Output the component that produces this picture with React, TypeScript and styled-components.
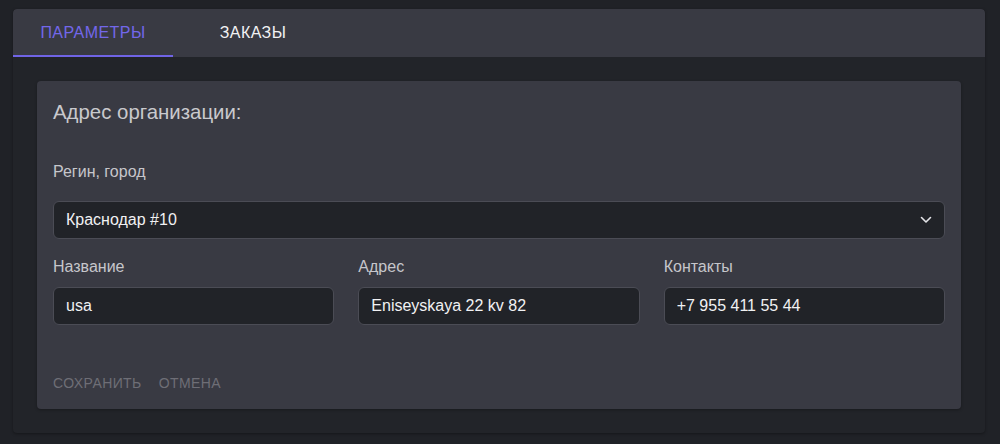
import React, { useState } from "react";
import styled, { createGlobalStyle } from "styled-components";

const GlobalStyle = createGlobalStyle`
  html, body {
    margin: 0;
    padding: 0;
    background: #202227;
    font-family: "Liberation Sans", Arial, sans-serif;
  }
`;

const Page = styled.div`
  padding: 9px 15px 11px 13px;
`;

const Panel = styled.div`
  background: #222429;
  border-radius: 4px;
  box-shadow: 0 1px 3px rgba(0, 0, 0, 0.35);
  overflow: hidden;
`;

const TabBar = styled.div`
  display: flex;
  height: 48px;
  background: #393a43;
  border-radius: 4px 4px 0 0;
`;

const Tab = styled.button<{ $active?: boolean }>`
  width: 160px;
  height: 48px;
  border: none;
  border-bottom: 2px solid ${(p) => (p.$active ? "#7064e6" : "transparent")};
  background: transparent;
  color: ${(p) => (p.$active ? "#7367ea" : "#f2f2f4")};
  font-family: inherit;
  font-size: 16px;
  letter-spacing: 0.02857em;
  text-transform: uppercase;
  padding: 2px 0 0;
  cursor: pointer;
`;

const Content = styled.div`
  padding: 24px;
`;

const Card = styled.div`
  background: #393a43;
  border-radius: 4px;
  box-shadow: 0 1px 3px rgba(0, 0, 0, 0.3);
  padding: 16px 16px 8px;
`;

const Title = styled.div`
  font-size: 20.4px;
  line-height: 30px;
  color: #c9c9cd;
`;

const Label = styled.div<{ $top?: number; $bottom?: number }>`
  font-size: 16px;
  line-height: 20px;
  color: #c6c6cb;
  margin-top: ${(p) => p.$top ?? 0}px;
  margin-bottom: ${(p) => p.$bottom ?? 10}px;
`;

const SelectBox = styled.div`
  display: flex;
  align-items: center;
  height: 38px;
  margin-top: 19px;
  box-sizing: border-box;
  border: 1px solid #4b4c55;
  border-radius: 6px;
  background: #212328;
  padding: 0 12px;
  color: #f1f1f3;
  font-size: 16px;
`;

const SelectText = styled.span`
  flex: 1;
`;

const Row = styled.div`
  display: grid;
  grid-template-columns: repeat(3, 1fr);
  gap: 24px;
  margin-top: 18px;
`;

const Field = styled.div`
  display: flex;
  flex-direction: column;
`;

const Input = styled.input`
  height: 38px;
  box-sizing: border-box;
  border: 1px solid #4b4c55;
  border-radius: 6px;
  background: #212328;
  padding: 0 12px;
  color: #f1f1f3;
  font-family: inherit;
  font-size: 16px;
  outline: none;
`;

const Actions = styled.div`
  display: flex;
  gap: 17px;
  margin-top: 40px;
`;

const TextButton = styled.button`
  height: 36px;
  border: none;
  background: transparent;
  padding: 0;
  color: #6e6e76;
  font-family: inherit;
  font-size: 14px;
  letter-spacing: 0.02857em;
  text-transform: uppercase;
`;

const Chevron = () => (
  <svg width="12" height="8" viewBox="0 0 12 8" fill="none">
    <path d="M1.5 1.5 L6 6 L10.5 1.5" stroke="#e4e4e8" strokeWidth="1.6" strokeLinecap="round" strokeLinejoin="round" />
  </svg>
);

export default function App() {
  const [tab, setTab] = useState(0);
  const [name, setName] = useState("usa");
  const [address, setAddress] = useState("Eniseyskaya 22 kv 82");
  const [contacts, setContacts] = useState("+7 955 411 55 44");

  return (
    <>
      <GlobalStyle />
      <Page>
        <Panel>
          <TabBar>
            <Tab $active={tab === 0} onClick={() => setTab(0)}>Параметры</Tab>
            <Tab $active={tab === 1} onClick={() => setTab(1)}>Заказы</Tab>
          </TabBar>
          <Content>
            <Card>
              <Title>Адрес организации:</Title>
              <Label $top={35} $bottom={0}>Регин, город</Label>
              <SelectBox>
                <SelectText>Краснодар #10</SelectText>
                <Chevron />
              </SelectBox>
              <Row>
                <Field>
                  <Label>Название</Label>
                  <Input value={name} onChange={(e) => setName(e.target.value)} />
                </Field>
                <Field>
                  <Label>Адрес</Label>
                  <Input value={address} onChange={(e) => setAddress(e.target.value)} />
                </Field>
                <Field>
                  <Label>Контакты</Label>
                  <Input value={contacts} onChange={(e) => setContacts(e.target.value)} />
                </Field>
              </Row>
              <Actions>
                <TextButton>Сохранить</TextButton>
                <TextButton>Отмена</TextButton>
              </Actions>
            </Card>
          </Content>
        </Panel>
      </Page>
    </>
  );
}
